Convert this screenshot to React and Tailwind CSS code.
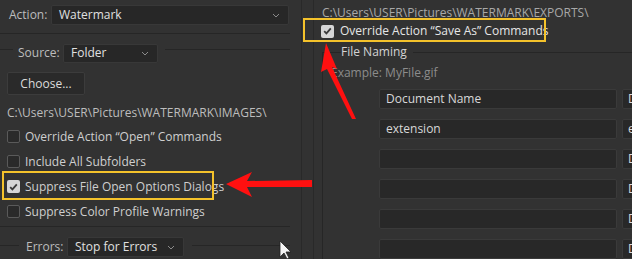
import React from "react";

const Chevron = () => (
  <svg width="8" height="5" viewBox="0 0 8 5" className="shrink-0">
    <path d="M1 1l3 3 3-3" fill="none" stroke="#8a8a8a" strokeWidth="1" />
  </svg>
);

const Select = ({ value, className }) => (
  <div className={`flex items-center justify-between bg-[#272727] border border-[#383838] rounded-[2px] pl-[7px] pr-[8px] text-[#e0e0e0] ${className}`}>
    <span>{value}</span>
    <Chevron />
  </div>
);

const Check = ({ checked }) =>
  checked ? (
    <div className="w-[13px] h-[13px] rounded-[2px] bg-[#d6d6d6] flex items-center justify-center shrink-0">
      <svg width="9" height="8" viewBox="0 0 9 8">
        <path d="M1.2 4.2l2.2 2.2 4.4-5" fill="none" stroke="#3a3a3a" strokeWidth="1.8" />
      </svg>
    </div>
  ) : (
    <div className="w-[13px] h-[13px] rounded-[2px] border border-[#5a5a5a] bg-[#2a2a2a] shrink-0" />
  );

const CheckRow = ({ label, checked }) => (
  <div className="flex items-center gap-[5px] h-[25px] pl-[7px]">
    <Check checked={checked} />
    <span className="text-[#cfcfcf]">{label}</span>
  </div>
);

const NameField = ({ value, side }) => (
  <div className="flex items-center gap-[5px] h-[20px]">
    <div className="w-[238px] shrink-0 h-full bg-[#282828] border border-[#3a3a3a] rounded-[2px] px-[6px] flex items-center text-[#d8d8d8]">
      {value}
    </div>
    <div className="w-[20px] shrink-0 h-full bg-[#282828] border border-[#3a3a3a] rounded-[2px] flex items-center pl-[5px] text-[#d8d8d8]">
      {side}
    </div>
  </div>
);

export default function App() {
  return (
    <div
      className="relative w-[632px] h-[259px] overflow-hidden bg-[#323232] text-[12px] leading-none flex"
      style={{ fontFamily: '"Open Sans", "Noto Sans", sans-serif' }}
    >
      {/* left column */}
      <div className="w-[290px] shrink-0 flex flex-col">
        <div className="flex items-center h-[20px] mt-[5px]">
          <span className="ml-[9px] w-[42px] text-[#bdbdbd]">Action:</span>
          <Select value="Watermark" className="w-[238px] h-[20px]" />
        </div>
        <div className="mt-[8px] h-px bg-[#262626]" />
        <div className="flex items-center h-[20px] mt-[9px]">
          <div className="w-[13px] h-px bg-[#262626] self-start mt-[6px]" />
          <span className="ml-[5px] w-[45px] text-[#bdbdbd]">Source:</span>
          <Select value="Folder" className="w-[95px] h-[19px]" />
          <div className="flex-1 h-px bg-[#262626] self-start mt-[6px] ml-[7px]" />
        </div>
        <div className="ml-[7px] mt-[9px] w-[78px] h-[23px] bg-[#2a2a2a] border border-[#3c3c3c] rounded-[2px] flex items-center justify-center text-[#dcdcdc]">
          Choose...
        </div>
        <div className="ml-[7px] mt-[12px] text-[#bdbdbd] whitespace-nowrap">C:\Users\USER\Pictures\WATERMARK\IMAGES\</div>
        <div className="mt-[5px]">
          <CheckRow label={"Override Action \u201cOpen\u201d Commands"} />
          <CheckRow label="Include All Subfolders" />
          <CheckRow label="Suppress File Open Options Dialogs" checked />
          <CheckRow label="Suppress Color Profile Warnings" />
        </div>
        <div className="mt-[2px] h-px bg-[#262626]" />
        <div className="flex items-center h-[20px] mt-[10px]">
          <div className="w-[19px] h-px bg-[#262626] self-start mt-[8px]" />
          <span className="ml-[7px] w-[41px] text-[#bdbdbd]">Errors:</span>
          <Select value="Stop for Errors" className="w-[117px] h-[20px]" />
          <div className="flex-1 h-px bg-[#262626] self-start mt-[8px] ml-[8px]" />
        </div>
      </div>

      {/* right column */}
      <div className="flex-1 flex">
        <div className="w-[11px]" />
        <div className="w-px bg-[#292929]" />
        <div className="w-[11px]" />
        <div className="w-px bg-[#292929]" />
        <div className="flex-1 flex flex-col pl-[8px]">
          <div className="h-[12px] mt-[7px] text-[#a8a8a8] whitespace-nowrap">C:\Users\USER\Pictures\WATERMARK\EXPORTS\</div>
          <div className="flex items-center gap-[6px] h-[14px] mt-[5px] -ml-[1px]">
            <Check checked />
            <span className="text-[#e6e6e6]">Override Action {"\u201c"}Save As{"\u201d"} Commands</span>
          </div>
          <div className="flex mt-[14px] border-l border-[#262626] flex-1">
            <div className="flex-1 flex flex-col">
              <div className="flex items-center h-[14px] -mt-[7px]">
                <div className="w-[18px] h-px bg-[#262626]" />
                <span className="text-[#d4d4d4]">File Naming</span>
                <div className="flex-1 h-px bg-[#262626] ml-[6px]" />
              </div>
              <div className="ml-[8px] mt-[8px] h-[12px] text-[#8c8c8c]">Example: MyFile.gif</div>
              <div className="ml-[56px] mt-[10px] flex flex-col gap-[10px]">
                <NameField value="Document Name" side="D" />
                <NameField value="extension" side="e" />
                <NameField value="" side="D" />
                <NameField value="" side="D" />
                <NameField value="" side="D" />
                <NameField value="" side="D" />
              </div>
            </div>
          </div>
        </div>
      </div>

      {/* annotation highlights */}
      <div className="absolute left-[2px] top-[171px] w-[212px] h-[29px] border-2 border-[#f4c22b]" />
      <div className="absolute left-[303px] top-[18px] w-[243px] h-[24px] border-2 border-[#f4c22b]" />

      {/* arrows */}
      <svg className="absolute left-0 top-0" width="632" height="259" viewBox="0 0 632 259">
        <path d="M226 184 L252 172 L247 181 L312 180 L312 187 L247 187 L252 197 Z" fill="#ff1010" />
        <path d="M326 43 L337 69 L332 67 L356 119 L352 119 L327 69 L321 72 Z" fill="#ff1010" />
        <path d="M280 241 L280 257 L284 253 L287 259 L289 258 L286 252 L291 252 Z" fill="#f4f4f4" stroke="#222" strokeWidth="0.8" />
      </svg>
    </div>
  );
}
